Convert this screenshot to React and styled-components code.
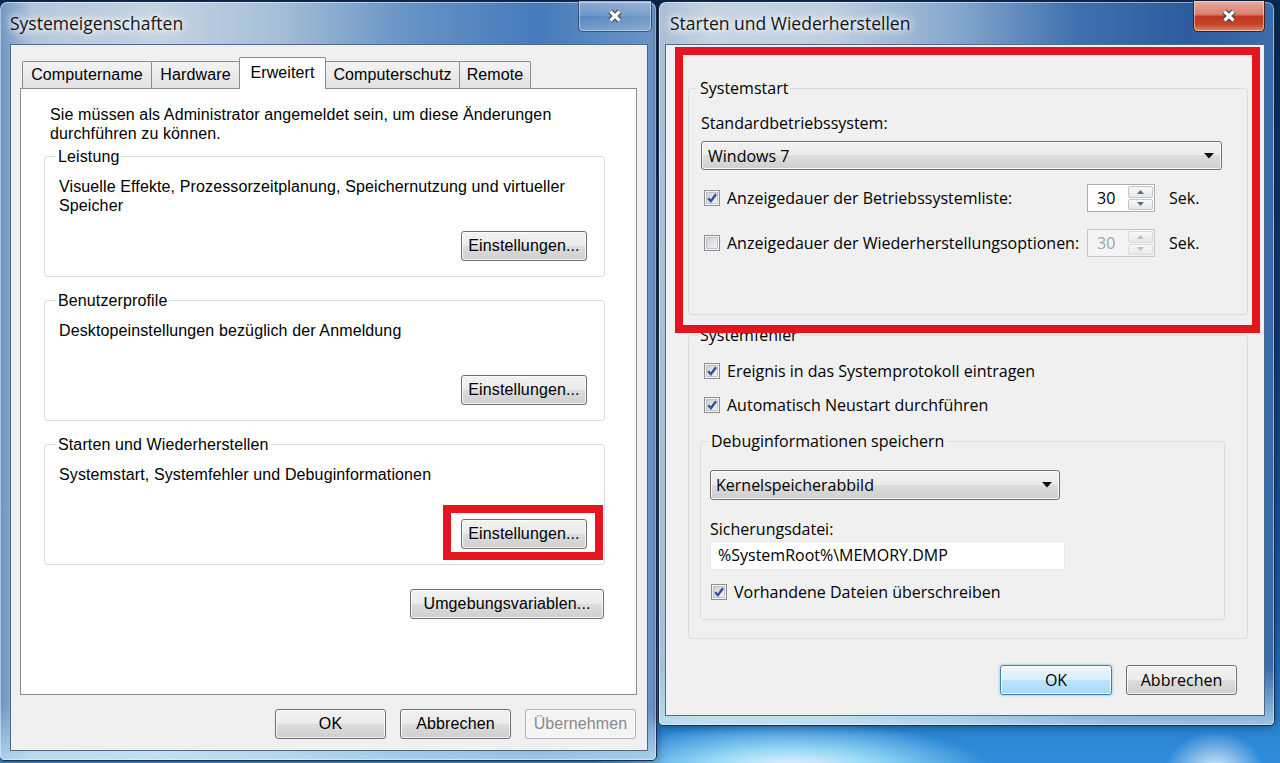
import React from 'react';
import styled, { createGlobalStyle } from 'styled-components';

const LEFT_FONT = '"Liberation Sans", Arial, sans-serif';
const RIGHT_FONT = '"Open Sans", "DejaVu Sans", sans-serif';

const GlobalStyle = createGlobalStyle`
  html, body {
    margin: 0;
    padding: 0;
  }
  body {
    width: 1280px;
    height: 763px;
    overflow: hidden;
    background: #0d3370;
  }
  * {
    box-sizing: border-box;
  }
`;

const Desktop = styled.main`
  position: relative;
  width: 1280px;
  height: 763px;
  overflow: hidden;
  background:
    radial-gradient(ellipse 200px 48px at 790px 770px, rgba(255, 255, 255, 0.95) 0%, rgba(165, 228, 250, 0.85) 45%, rgba(60, 160, 225, 0) 100%),
    radial-gradient(ellipse 50px 40px at 1215px 772px, rgba(255, 255, 255, 0.85), rgba(255, 255, 255, 0) 100%),
    linear-gradient(180deg, #0b2a5a 0%, #103d7c 45%, #1a5fae 80%, #2f8ddb 100%);
`;

const frames = {
  inactive: `
    linear-gradient(180deg, rgba(255,255,255,0) 0%, rgba(255,255,255,0) 93%, rgba(190,228,248,0.75) 100%),
    linear-gradient(90deg, #6f95c2 0%, #b3c6da 5%, #c4d3e1 24%, #a7bfd7 42%, #6793c5 62%, #467abb 82%, #6a95c6 100%)
  `,
  active: `
    linear-gradient(180deg, rgba(255,255,255,0) 0%, rgba(255,255,255,0) 92%, rgba(190,228,248,0.75) 100%),
    linear-gradient(90deg, #a8bed6 0%, #c5d3e1 8%, #bfcfdf 28%, #86a8cd 48%, #3f70ae 68%, #2c5c9d 86%, #3b6dab 100%)
  `,
};

const Window = styled.section`
  position: absolute;
  left: ${p => p.$x}px;
  top: ${p => p.$y}px;
  width: ${p => p.$w}px;
  height: ${p => p.$h}px;
  display: flex;
  flex-direction: column;
  padding: ${p => p.$pad};
  border: 1px solid #1b2f4d;
  border-radius: 8px 8px 5px 5px;
  background: ${p => frames[p.$state]};
  box-shadow: inset 0 0 0 1px rgba(255, 255, 255, 0.45), 0 0 10px rgba(0, 0, 0, 0.45);
  font-family: ${p => p.$font};
  font-size: 16px;
  letter-spacing: ${p => p.$tracking || 0}px;
  color: #000;
`;

const TitleBar = styled.header`
  height: 42px;
  flex-shrink: 0;
  display: flex;
  align-items: center;
  padding: 0 0 1px ${p => p.$indent}px;
`;

const Title = styled.h1`
  margin: 0;
  font-family: ${RIGHT_FONT};
  font-size: 17.5px;
  font-weight: 400;
  letter-spacing: 0;
  color: #151515;
  text-shadow: 0 0 6px #fff, 0 0 10px rgba(255, 255, 255, 0.95), 0 0 16px rgba(255, 255, 255, 0.8);
`;

const CloseButton = styled.div`
  position: absolute;
  top: -1px;
  right: ${p => p.$right}px;
  width: ${p => p.$w}px;
  height: 31px;
  display: flex;
  align-items: center;
  justify-content: center;
  border: 1px solid ${p => (p.$active ? '#4e1a12' : 'rgba(30, 55, 90, 0.75)')};
  border-top: none;
  border-radius: 0 0 5px 5px;
  background: ${p =>
    p.$active
      ? 'linear-gradient(180deg, #e9ab9c 0%, #d8826e 44%, #c1361d 52%, #c4462b 78%, #e0896a 100%)'
      : 'linear-gradient(180deg, rgba(255,255,255,0.32) 0%, rgba(255,255,255,0.14) 48%, rgba(255,255,255,0.04) 52%, rgba(255,255,255,0.22) 100%)'};
  box-shadow: inset 0 0 0 1px rgba(255, 255, 255, 0.45);
`;

const CloseGlyph = () => (
  <svg width="18" height="14" viewBox="0 0 18 14">
    <path d="M4.5 2.5 L13.5 11.5 M13.5 2.5 L4.5 11.5" stroke="#3b3f47" strokeWidth="5.6" />
    <path d="M4.5 2.5 L13.5 11.5 M13.5 2.5 L4.5 11.5" stroke="#fbfbfb" strokeWidth="3.2" />
  </svg>
);

const Client = styled.div`
  flex: 1;
  display: flex;
  flex-direction: column;
  background: #f0f0f0;
  border: 1px solid #4d6889;
  padding: ${p => p.$pad};
`;

/* tab control */

const TabStrip = styled.div`
  display: flex;
  align-items: flex-end;
  height: 32px;
  margin-bottom: -1px;
  padding-left: 3px;
`;

const Tab = styled.div`
  position: relative;
  z-index: ${p => (p.$active ? 1 : 0)};
  width: ${p => p.$w}px;
  height: ${p => (p.$active ? 32 : 27)}px;
  margin-bottom: ${p => (p.$active ? 0 : 1)}px;
  margin-left: -1px;
  display: flex;
  align-items: center;
  justify-content: center;
  padding-bottom: ${p => (p.$active ? 1 : 0)}px;
  border: 1px solid #898c95;
  border-bottom: none;
  border-radius: 2px 2px 0 0;
  background: ${p => (p.$active ? '#fff' : 'linear-gradient(180deg, #f3f3f3 0%, #ebebeb 50%, #e1e1e1 100%)')};
  white-space: nowrap;
`;

const Panel = styled.div`
  height: 607px;
  flex-shrink: 0;
  display: flex;
  flex-direction: column;
  padding: 16px 31px 0 23px;
  border: 1px solid #898c95;
  background: #fff;
`;

const Intro = styled.p`
  margin: 0 0 4px 6px;
  line-height: 19px;
`;

/* group boxes */

const GroupBox = styled.fieldset`
  margin: ${p => p.$margin || 0};
  padding: ${p => p.$pad};
  min-width: 0;
  border: 1px solid #d5dfe5;
  border-radius: 3px;
`;

const GroupTitle = styled.legend`
  margin-left: ${p => p.$shift}px;
  padding: 0 2px;
  line-height: 19px;
`;

const GroupBody = styled.div`
  height: ${p => p.$h}px;
  display: flex;
  flex-direction: column;
  align-items: flex-start;
`;

const Text = styled.p`
  margin: 0;
  line-height: 19px;
`;

const PushButton = styled.button`
  width: ${p => p.$w}px;
  height: 30px;
  flex-shrink: 0;
  padding: 0;
  margin: ${p => p.$margin || 0};
  align-self: ${p => p.$align || 'auto'};
  font: inherit;
  letter-spacing: inherit;
  color: ${p => (p.disabled ? '#8a8a8a' : '#000')};
  border: 1px solid ${p => (p.$primary ? '#3c7fb1' : p.disabled ? '#adb2b5' : '#707070')};
  border-radius: 3px;
  background: ${p =>
    p.$primary
      ? 'linear-gradient(180deg, #eaf6fd 0%, #d9f0fc 50%, #bee6fd 50%, #a7d9f5 100%)'
      : p.disabled
        ? '#f4f4f4'
        : 'linear-gradient(180deg, #f2f2f2 0%, #ebebeb 50%, #dddddd 50%, #cfcfcf 100%)'};
  box-shadow: ${p =>
    p.$primary
      ? 'inset 0 0 0 1px rgba(255,255,255,0.9), 0 0 3px rgba(60,160,220,0.7)'
      : 'inset 0 0 0 1px rgba(255,255,255,0.75)'};
`;

const ButtonRow = styled.div`
  display: flex;
  justify-content: flex-end;
  gap: 14px;
  margin-top: ${p => p.$mt}px;
  padding-right: ${p => p.$pr || 0}px;
`;

/* right dialog controls */

const FieldLabel = styled.div`
  line-height: 19px;
  margin-top: ${p => p.$mt || 0}px;
`;

const DropList = styled.div`
  width: ${p => p.$w}px;
  height: ${p => p.$h}px;
  margin-top: ${p => p.$mt}px;
  display: flex;
  align-items: center;
  justify-content: space-between;
  padding: 0 7px 0 ${p => p.$pl}px;
  border: 1px solid #707070;
  border-radius: 3px;
  background: linear-gradient(180deg, #f2f2f2 0%, #ebebeb 50%, #dddddd 50%, #cfcfcf 100%);
  box-shadow: inset 0 0 0 1px rgba(255, 255, 255, 0.75);
`;

const DropArrow = () => (
  <svg width="10" height="6" viewBox="0 0 10 6">
    <path d="M0 0 L10 0 L5 5.5 Z" fill="#111" />
  </svg>
);

const TimeoutRow = styled.div`
  display: grid;
  grid-template-columns: 386px 68px auto;
  align-items: center;
  height: 28px;
  margin-top: ${p => p.$mt}px;
`;

const CheckRow = styled.label`
  display: flex;
  align-items: center;
  gap: 7px;
  height: ${p => p.$h || 24}px;
  margin: ${p => p.$mt || 0}px 0 0 ${p => p.$indent}px;
  white-space: nowrap;
`;

const CheckBox = ({ checked }) => (
  <svg width="16" height="16" viewBox="0 0 16 16">
    <defs>
      <linearGradient id="checkFill" x1="0" y1="0" x2="1" y2="1">
        <stop offset="0" stopColor="#c9ced6" />
        <stop offset="1" stopColor="#f7f7f7" />
      </linearGradient>
    </defs>
    <rect x="0.5" y="0.5" width="15" height="15" fill="#f5f5f5" stroke="#8e8f8f" />
    <rect x="2.5" y="2.5" width="11" height="11" fill="url(#checkFill)" stroke="#b5b9c0" strokeWidth="0.8" />
    {checked && <path d="M4.2 8.2 L6.9 11.2 L12 4.3" fill="none" stroke="#34509a" strokeWidth="2.4" />}
  </svg>
);

const SpinField = styled.div`
  display: flex;
  height: 28px;
  border: 1px solid ${p => (p.$disabled ? '#c3c7cc' : '#abadb3')};
  background: ${p => (p.$disabled ? '#f4f4f4' : '#fff')};
  color: ${p => (p.$disabled ? '#a3a3a3' : '#000')};
`;

const SpinValue = styled.span`
  flex: 1;
  padding-left: 9px;
  line-height: 26px;
`;

const SpinButtons = styled.span`
  width: 27px;
  display: flex;
  flex-direction: column;
  gap: 1px;
  padding: 1px;
`;

const SpinStep = styled.span`
  flex: 1;
  display: flex;
  align-items: center;
  justify-content: center;
  border: 1px solid ${p => (p.$disabled ? '#d8dbe0' : '#c2c7cf')};
  border-radius: 2px;
  background: linear-gradient(180deg, #f8f8f8 0%, #e8e8e8 100%);
`;

const SpinArrow = ({ up, muted }) => (
  <svg width="7" height="4" viewBox="0 0 7 4">
    <path d={up ? 'M0 4 L3.5 0 L7 4 Z' : 'M0 0 L3.5 4 L7 0 Z'} fill={muted ? '#b9bec5' : '#5a687c'} />
  </svg>
);

const SpinBox = ({ value, disabled }) => (
  <SpinField $disabled={disabled}>
    <SpinValue>{value}</SpinValue>
    <SpinButtons>
      <SpinStep $disabled={disabled}>
        <SpinArrow up muted={disabled} />
      </SpinStep>
      <SpinStep $disabled={disabled}>
        <SpinArrow muted={disabled} />
      </SpinStep>
    </SpinButtons>
  </SpinField>
);

const Unit = styled.span`
  margin-left: 14px;
`;

const TextInput = styled.div`
  width: ${p => p.$w}px;
  height: 29px;
  margin-top: ${p => p.$mt}px;
  padding-left: 7px;
  line-height: 27px;
  border: 1px solid #e3e6ec;
  background: #fff;
  white-space: nowrap;
`;

const Highlight = styled.div`
  position: absolute;
  left: ${p => p.$x}px;
  top: ${p => p.$y}px;
  width: ${p => p.$w}px;
  height: ${p => p.$h}px;
  border: 8px solid #e3161f;
  pointer-events: none;
`;

const tabs = [
  { label: 'Computername', w: 130 },
  { label: 'Hardware', w: 89 },
  { label: 'Erweitert', w: 87, active: true },
  { label: 'Computerschutz', w: 135 },
  { label: 'Remote', w: 72 },
];

const SystemProperties = () => (
  <Window
    $x={-1}
    $y={1}
    $w={658}
    $h={760}
    $pad="0 8px 9px 10px"
    $state="inactive"
    $font={LEFT_FONT}
    $tracking={0.12}
  >
    <TitleBar $indent={0}>
      <Title>Systemeigenschaften</Title>
    </TitleBar>
    <CloseButton $right={4} $w={74}>
      <CloseGlyph />
    </CloseButton>
    <Client $pad="12px 10px 0 9px">
      <TabStrip>
        {tabs.map(t => (
          <Tab key={t.label} $w={t.w} $active={t.active}>
            {t.label}
          </Tab>
        ))}
      </TabStrip>
      <Panel>
        <Intro>
          Sie müssen als Administrator angemeldet sein, um diese Änderungen
          <br />
          durchführen zu können.
        </Intro>
        <GroupBox $pad="11px 17px 15px 14px">
          <GroupTitle $shift={-3}>Leistung</GroupTitle>
          <GroupBody $h={84}>
            <Text>
              Visuelle Effekte, Prozessorzeitplanung, Speichernutzung und virtueller
              <br />
              Speicher
            </Text>
            <PushButton $w={126} $align="flex-end" $margin="auto 0 0">
              Einstellungen...
            </PushButton>
          </GroupBody>
        </GroupBox>
        <GroupBox $margin="14px 0 0" $pad="11px 17px 15px 14px">
          <GroupTitle $shift={-3}>Benutzerprofile</GroupTitle>
          <GroupBody $h={84}>
            <Text>Desktopeinstellungen bezüglich der Anmeldung</Text>
            <PushButton $w={126} $align="flex-end" $margin="auto 0 0">
              Einstellungen...
            </PushButton>
          </GroupBody>
        </GroupBox>
        <GroupBox $margin="14px 0 0" $pad="11px 17px 15px 14px">
          <GroupTitle $shift={-3}>Starten und Wiederherstellen</GroupTitle>
          <GroupBody $h={84}>
            <Text>Systemstart, Systemfehler und Debuginformationen</Text>
            <PushButton $w={126} $align="flex-end" $margin="auto 0 0">
              Einstellungen...
            </PushButton>
          </GroupBody>
        </GroupBox>
        <PushButton $w={194} $align="flex-end" $margin="24px 1px 0 0">
          Umgebungsvariablen...
        </PushButton>
      </Panel>
      <ButtonRow $mt={14} $pr={1}>
        <PushButton $w={111}>OK</PushButton>
        <PushButton $w={111}>Abbrechen</PushButton>
        <PushButton $w={111} disabled>
          Übernehmen
        </PushButton>
      </ButtonRow>
    </Client>
  </Window>
);

const StartupRecovery = () => (
  <Window $x={658} $y={1} $w={617} $h={725} $pad="0 9px 9px 6px" $state="active" $font={RIGHT_FONT}>
    <TitleBar $indent={5}>
      <Title>Starten und Wiederherstellen</Title>
    </TitleBar>
    <CloseButton $right={9} $w={72} $active>
      <CloseGlyph />
    </CloseButton>
    <Client $pad="34px 16px 0 22px">
      <GroupBox $pad="16px 25px 57px 12px">
        <GroupTitle $shift={-3}>Systemstart</GroupTitle>
        <FieldLabel>Standardbetriebssystem:</FieldLabel>
        <DropList $w={521} $h={29} $mt={8} $pl={6}>
          Windows 7
          <DropArrow />
        </DropList>
        <TimeoutRow $mt={14}>
          <CheckRow $indent={3}>
            <CheckBox checked />
            Anzeigedauer der Betriebssystemliste:
          </CheckRow>
          <SpinBox value="30" />
          <Unit>Sek.</Unit>
        </TimeoutRow>
        <TimeoutRow $mt={17}>
          <CheckRow $indent={3}>
            <CheckBox />
            Anzeigedauer der Wiederherstellungsoptionen:
          </CheckRow>
          <SpinBox value="30" disabled />
          <Unit>Sek.</Unit>
        </TimeoutRow>
      </GroupBox>
      <GroupBox $margin="11px 0 0" $pad="14px 22px 18px 11px">
        <GroupTitle $shift={-2}>Systemfehler</GroupTitle>
        <CheckRow $indent={4}>
          <CheckBox checked />
          Ereignis in das Systemprotokoll eintragen
        </CheckRow>
        <CheckRow $indent={4} $mt={10}>
          <CheckBox checked />
          Automatisch Neustart durchführen
        </CheckRow>
        <GroupBox $margin="15px 0 0" $pad="19px 0 15px 9px">
          <GroupTitle $shift={-1}>Debuginformationen speichern</GroupTitle>
          <DropList $w={350} $h={30} $mt={0} $pl={5}>
            Kernelspeicherabbild
            <DropArrow />
          </DropList>
          <FieldLabel $mt={20}>Sicherungsdatei:</FieldLabel>
          <TextInput $w={355} $mt={2}>
            %SystemRoot%\MEMORY.DMP
          </TextInput>
          <CheckRow $indent={1} $mt={10}>
            <CheckBox checked />
            Vorhandene Dateien überschreiben
          </CheckRow>
        </GroupBox>
      </GroupBox>
      <ButtonRow $mt={26} $pr={11}>
        <PushButton $w={112} $primary>
          OK
        </PushButton>
        <PushButton $w={111}>Abbrechen</PushButton>
      </ButtonRow>
    </Client>
  </Window>
);

const App = () => (
  <>
    <GlobalStyle />
    <Desktop>
      <SystemProperties />
      <StartupRecovery />
      <Highlight $x={443} $y={505} $w={160} $h={55} />
      <Highlight $x={675} $y={47} $w={585} $h={286} />
    </Desktop>
  </>
);

export default App;
